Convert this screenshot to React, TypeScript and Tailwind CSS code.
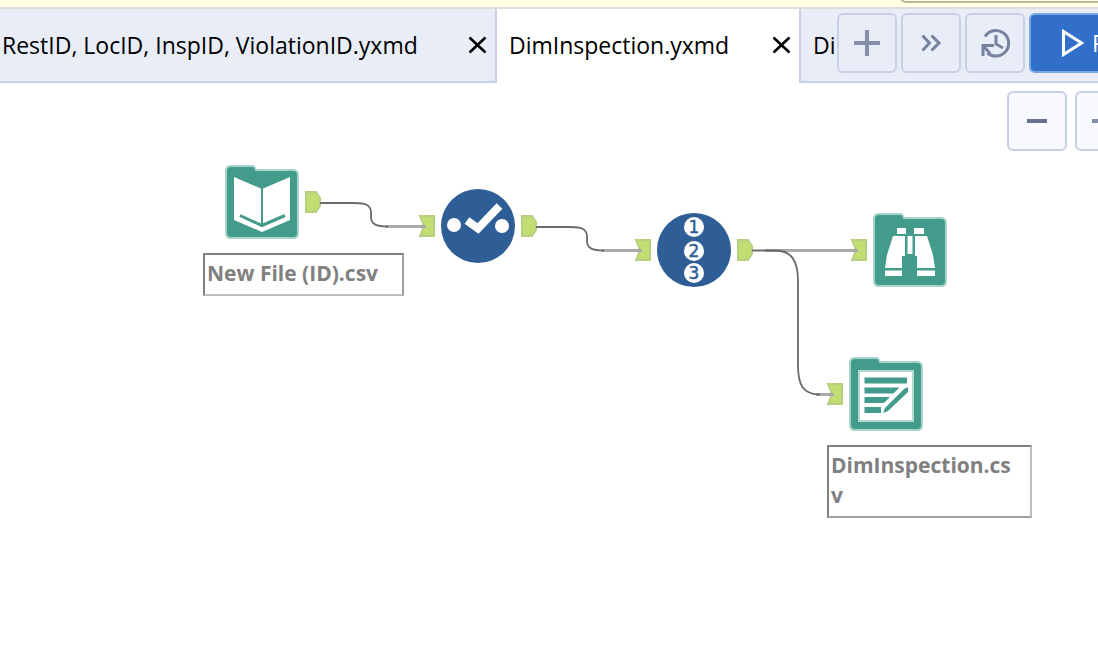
import React from "react";

const toolButton =
  "flex h-[60px] w-[60px] shrink-0 items-center justify-center rounded-md border-2 border-[#c8d0e5] text-[#66728f]";

const caption =
  "border-2 border-t-[#808080] border-l-[#808080] px-[2px] pt-[3px] pb-[6px] text-[21px] leading-[30px] font-bold text-[#808080]";

function CloseIcon() {
  return (
    <svg width="20" height="20" viewBox="0 0 20 20" fill="none" stroke="#000" strokeWidth="2.6" aria-hidden="true">
      <path d="M2.500 2.500 18.500 17.500M18.500 2.500 2.500 17.500" />
    </svg>
  );
}

function PlusIcon() {
  return (
    <svg width="28" height="28" viewBox="0 0 28 28" fill="none" stroke="#8490ab" strokeWidth="4" aria-hidden="true">
      <path d="M14 1v26M1 14h26" />
    </svg>
  );
}

function ChevronsIcon() {
  return (
    <svg width="24" height="24" viewBox="0 0 24 24" fill="none" stroke="#77829e" strokeWidth="3" aria-hidden="true">
      <path d="M3.500 4.500 10.500 12 3.500 19.500M12.500 4.500l7.500 7.500-7.500 7.500" />
    </svg>
  );
}

function HistoryIcon() {
  return (
    <svg width="32" height="32" viewBox="0 0 32 32" fill="none" stroke="#77829e" strokeWidth="3" aria-hidden="true">
      <path d="M6 9.500A12.800 12.800 0 1 1 8.500 26" />
      <path d="M15 18.500H4V29M4 18.500l7 8" />
      <path d="M17 8v9l7 4" />
    </svg>
  );
}

function Folder({ children }: { children: React.ReactNode }) {
  return (
    <svg width="74" height="74" viewBox="0 0 74 74" aria-hidden="true">
      <path
        d="M6 1H27Q30 1 31 5H68Q73 5 73 10V68Q73 73 68 73H6Q1 73 1 68V6Q1 1 6 1Z"
        fill="#439b8b"
        stroke="#a6d3ca"
        strokeWidth="2"
      />
      {children}
    </svg>
  );
}

function BookIcon() {
  return (
    <Folder>
      <path d="M9 12 37 24 65 12V55L37 67 9 55Z" fill="#fff" />
      <path d="M37 23V60" stroke="#439b8b" strokeWidth="2" />
      <path d="M15 50.500 37 60.500 60 50.500" fill="none" stroke="#439b8b" strokeWidth="3" />
    </Folder>
  );
}

function BinocularsIcon() {
  return (
    <Folder>
      <g fill="#fff">
        <path d="M24 15H33V21H24ZM41 15H51V21H41Z" />
        <path d="M20 23H32V43H29V55H12L14 42ZM42 23H54L60 42 62 55H44V43H42Z" />
        <path d="M12 57.500H29V63H12ZM44 57.500H62V63H44Z" />
        <path d="M34.500 23H39.500V41H34.500Z" />
      </g>
    </Folder>
  );
}

function WriteIcon() {
  return (
    <Folder>
      <path d="M10 14H64V64H10Z" fill="#fff" stroke="#b3d9d1" strokeWidth="2" />
      <path d="M15.500 23.500H58M15.500 33.500H50M15.500 43H41M15.500 53H32" stroke="#439b8b" strokeWidth="6" />
      <path d="M35 53 57 31" stroke="#fff" strokeWidth="10" />
      <path d="M34 56 36 51 55 32 59 30V35L39 54Z" fill="#439b8b" />
    </Folder>
  );
}

function SelectIcon() {
  return (
    <svg width="74" height="74" viewBox="0 0 74 74" aria-hidden="true">
      <circle cx="37" cy="37" r="37" fill="#2e5e95" />
      <circle cx="13" cy="36" r="7" fill="#fff" />
      <circle cx="61" cy="37" r="7" fill="#fff" />
      <path d="M26 31.500 37 39.500 58.500 17" fill="none" stroke="#fff" strokeWidth="8" />
    </svg>
  );
}

function RecordIdIcon() {
  return (
    <svg width="74" height="74" viewBox="0 0 74 74" aria-hidden="true">
      <circle cx="37" cy="37" r="37" fill="#2e5e95" />
      {[14, 38, 60].map((y, i) => (
        <g key={y}>
          <circle cx="37" cy={y} r="10" fill="#fff" />
          <text
            x="37"
            y={y + 6}
            textAnchor="middle"
            fill="#2e5e95"
            stroke="#2e5e95"
            strokeWidth="0.5"
            className="font-['DejaVu_Sans',sans-serif] text-[17px]"
          >
            {i + 1}
          </text>
        </g>
      ))}
    </svg>
  );
}

function Connections() {
  const outputs = [[306, 108], [522, 132], [738, 156]];
  const inputs = [[420, 132], [636, 156], [852, 156], [828, 300]];
  return (
    <svg className="absolute top-0 left-0" width="1098" height="480" viewBox="0 0 1098 480" aria-hidden="true">
      {outputs.map(([x, y]) => (
        <path key={x} d={`M${x} ${y + 1}h10l4 6v8l-4 6h-10z`} fill="#c2dd72" stroke="#b8cf80" strokeWidth="2" />
      ))}
      {inputs.map(([x, y]) => (
        <path key={x} d={`M${x} ${y + 1}h14v20h-14l3-7v-6z`} fill="#c2dd72" stroke="#b8cf80" strokeWidth="2" />
      ))}
      <g fill="none">
        <g stroke="#aaa" strokeWidth="3">
          <path d="M386 143.500H426M602 167.500H642M765 167.500H858M816 311.500H834" />
        </g>
        <g stroke="#6a6a6a" strokeWidth="1.8">
          <path d="M320 120H354C366 120 371 122 371 130V134C371 141 376 143.500 388 143.500" />
          <path d="M536 144H570C582 144 587 146 587 154V158C587 165 592 167.500 604 167.500" />
          <path d="M752 167.500H775C791 167.500 798 177 798 198V282C798 302 803 311.500 820 311.500" />
        </g>
      </g>
    </svg>
  );
}

export default function App() {
  return (
    <div className="flex min-h-screen w-full flex-col overflow-hidden bg-white font-['Open_Sans','Noto_Sans',sans-serif] text-[23px] text-black">
      <div className="flex h-[9px] justify-end overflow-hidden border-b-2 border-[#dddeda] bg-[#ffffe1]">
        <div className="-mt-2 h-[11px] w-[198px] rounded-bl-md border-b-2 border-l-2 border-[#b9baa0]" />
      </div>

      <header className="flex h-[74px] w-full overflow-hidden">
        <div className="flex w-[497px] shrink-0 items-center justify-between border-r-2 border-b-2 border-[#c8d0e5] bg-[#e9edf8] pr-2 pl-[2px]">
          <button type="button" className="whitespace-nowrap">
            RestID, LocID, InspID, ViolationID.yxmd
          </button>
          <button type="button" aria-label="Close RestID tab"><CloseIcon /></button>
        </div>
        <div className="flex w-[302px] shrink-0 items-center justify-between bg-white pr-2 pb-[2px] pl-3">
          <button type="button" className="whitespace-nowrap">DimInspection.yxmd</button>
          <button type="button" aria-label="Close DimInspection tab"><CloseIcon /></button>
        </div>
        <div className="flex min-w-0 flex-1 items-center overflow-hidden border-b-2 border-l-2 border-[#c8d0e5] bg-[#e9edf8] pl-3">
          <button type="button" className="whitespace-nowrap">Di</button>
        </div>
        <div className="flex w-[261px] shrink-0 gap-1 overflow-hidden border-b-2 border-[#c8d0e5] bg-[#e9edf8] pt-1">
          <button type="button" aria-label="New workflow" className={toolButton}><PlusIcon /></button>
          <button type="button" aria-label="More tabs" className={toolButton}><ChevronsIcon /></button>
          <button type="button" aria-label="History" className={toolButton}><HistoryIcon /></button>
          <button
            type="button"
            className="flex h-[60px] w-[130px] shrink-0 items-center gap-2 rounded-md border-2 border-[#78a7df] bg-[#316fca] pl-[29px] text-white"
          >
            <svg className="shrink-0" width="24" height="28" viewBox="0 0 24 28" fill="none" stroke="#fff" strokeWidth="3" aria-hidden="true">
              <path d="M3.500 2.500 21.500 14 3.500 25.500Z" />
            </svg>
            Run
          </button>
        </div>
      </header>

      <main className="relative flex-1 overflow-hidden">
        <div className="flex justify-end pt-2">
          <div className="flex w-[91px] gap-2 overflow-hidden">
            <button type="button" aria-label="Zoom out" className={`${toolButton} bg-[#f8faff]`}>
              <svg width="20" height="4" viewBox="0 0 20 4" fill="currentColor" aria-hidden="true">
                <path d="M0 0h20v4H0z" />
              </svg>
            </button>
            <button type="button" aria-label="Zoom in" className={`${toolButton} bg-[#f8faff]`}><PlusIcon /></button>
          </div>
        </div>

        <Connections />
        <div className="absolute top-[82px] left-[225px]"><BookIcon /></div>
        <div className="absolute top-[106px] left-[441px]"><SelectIcon /></div>
        <div className="absolute top-[130px] left-[657px]"><RecordIdIcon /></div>
        <div className="absolute top-[130px] left-[873px]"><BinocularsIcon /></div>
        <div className="absolute top-[274px] left-[849px]"><WriteIcon /></div>
        <div className={`${caption} absolute top-[170px] left-[203px] w-[201px] border-r-[#a0a0a0] border-b-[#bdbdbd]`}>
          New File (ID).csv
        </div>
        <div className={`${caption} absolute top-[362px] left-[827px] w-[205px] border-r-[#bdbdbd] border-b-[#a0a0a0]`}>
          DimInspection.cs
          <br />v
        </div>
      </main>
    </div>
  );
}
